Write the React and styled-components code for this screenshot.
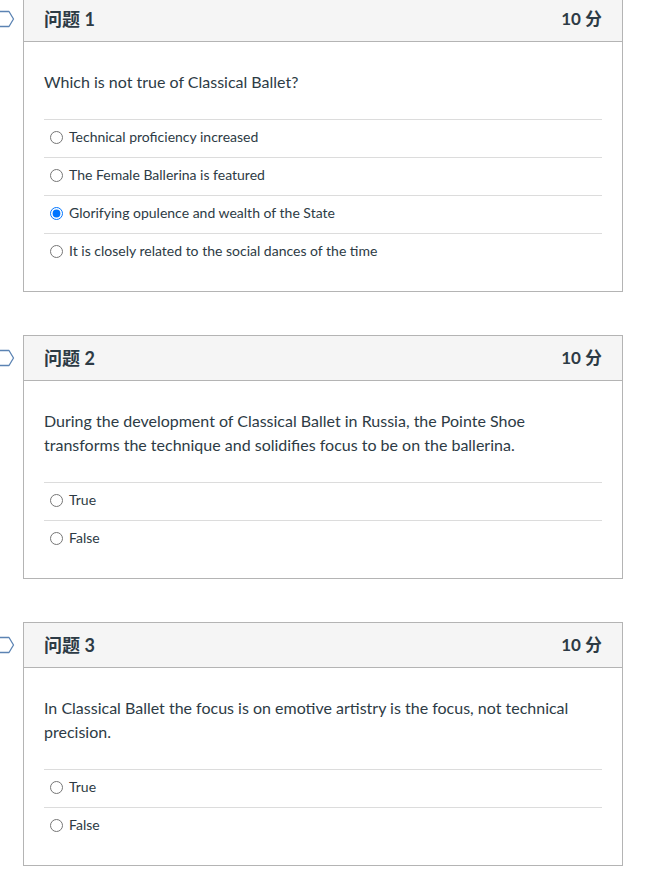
import React from "react";
import styled, { createGlobalStyle } from "styled-components";

const questions = [
  {
    id: 1,
    points: 10,
    text: "Which is not true of Classical Ballet?",
    answers: [
      "Technical proficiency increased",
      "The Female Ballerina is featured",
      "Glorifying opulence and wealth of the State",
      "It is closely related to the social dances of the time",
    ],
    selected: 2,
  },
  {
    id: 2,
    points: 10,
    text:
      "During the development of Classical Ballet in Russia, the Pointe Shoe transforms the technique and solidifies focus to be on the ballerina.",
    answers: ["True", "False"],
    selected: -1,
  },
  {
    id: 3,
    points: 10,
    text:
      "In Classical Ballet the focus is on emotive artistry is the focus, not technical precision.",
    answers: ["True", "False"],
    selected: -1,
  },
];

function Flag() {
  return (
    <FlagIcon width="30" height="18" viewBox="0 0 30 18">
      <path
        d="M1 1.5 H24 L28.5 9 L24 16.5 H1 Z"
        fill="none"
        stroke="#5b83b3"
        strokeWidth="1.3"
        strokeLinejoin="round"
      />
    </FlagIcon>
  );
}

function Question({ q }) {
  return (
    <Card>
      <Flag />
      <Header>
        <Title>问题 {q.id}</Title>
        <Points>{q.points} 分</Points>
      </Header>
      <Body>
        <QuestionText>{q.text}</QuestionText>
        <AnswerList>
          {q.answers.map((a, i) => (
            <Answer key={i}>
              <input
                type="radio"
                name={"q" + q.id}
                checked={i === q.selected}
                readOnly
              />
              <span>{a}</span>
            </Answer>
          ))}
        </AnswerList>
      </Body>
    </Card>
  );
}

export default function App() {
  return (
    <>
      <GlobalStyle />
      <Page>
        {questions.map((q) => (
          <Question key={q.id} q={q} />
        ))}
      </Page>
    </>
  );
}

const GlobalStyle = createGlobalStyle`
  body {
    margin: 0;
    background: #fff;
    font-family: Lato, "Noto Sans CJK SC", sans-serif;
    color: #2d3b45;
  }
`;

const Page = styled.div`
  display: flex;
  flex-direction: column;
  gap: 43px;
  margin-top: -4px;
  padding-left: 23px;
  width: 600px;
`;

const Card = styled.div`
  position: relative;
  border: 1px solid #b4b4b4;
  background: #fff;
`;

const FlagIcon = styled.svg`
  position: absolute;
  left: -39px;
  top: 13px;
`;

const Header = styled.div`
  height: 41px;
  padding: 0 20px 3px;
  display: flex;
  align-items: center;
  justify-content: space-between;
  background: #f5f5f5;
  border-bottom: 1px solid #b4b4b4;
`;

const Title = styled.div`
  font-size: 18px;
  font-weight: 700;
  color: #2d3b45;
`;

const Points = styled.div`
  font-size: 17px;
  font-weight: 700;
  color: #2d3b45;
`;

const Body = styled.div`
  padding: 28px 20px 20px;
`;

const QuestionText = styled.div`
  font-size: 16px;
  line-height: 24px;
  margin-bottom: 25px;
  padding-right: 30px;
`;

const AnswerList = styled.div`
  display: flex;
  flex-direction: column;
`;

const Answer = styled.label`
  display: flex;
  align-items: center;
  height: 32px;
  padding-bottom: 5px;
  border-top: 1px solid #dcdcdc;
  font-size: 14px;
  color: #2d3b45;

  input {
    width: 13px;
    height: 13px;
    margin: 2px 6px 0 6px;
  }
`;
